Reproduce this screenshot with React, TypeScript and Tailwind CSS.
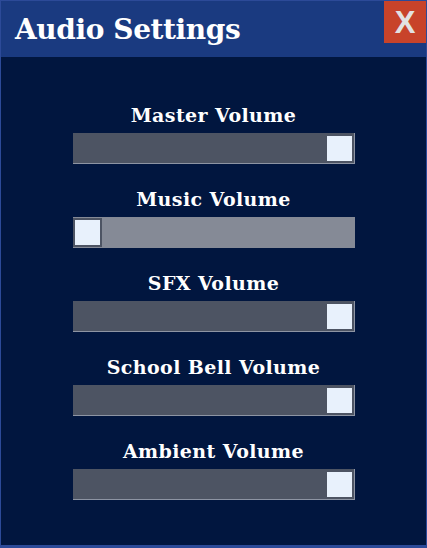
const sliders = [
  { label: 'Master Volume', value: 100 },
  { label: 'Music Volume', value: 0 },
  { label: 'SFX Volume', value: 100 },
  { label: 'School Bell Volume', value: 100 },
  { label: 'Ambient Volume', value: 100 },
];

export default function App() {
  return (
    <div className="w-[427px] h-[548px] bg-[#01163f] border border-b-[3px] border-[#2c4a98] flex flex-col font-['DejaVu_Serif',serif]">
      <header className="h-[56px] bg-[#1a3a80] flex items-start justify-between shrink-0">
        <h1 className="text-[28px] leading-[58px] font-bold text-white pl-[14px] tracking-[-0.4px]">
          Audio Settings
        </h1>
        <button className="w-[42px] h-[42px] bg-[#c8432a] flex items-center justify-center font-['Liberation_Sans',sans-serif] font-bold text-[31px] leading-none text-[#e2e2e2]">
          X
        </button>
      </header>

      <div className="flex flex-col items-center pt-[46px] gap-[23px]">
        {sliders.map((s) => (
          <div key={s.label} className="flex flex-col items-center gap-[6px]">
            <span className="text-[19px] leading-[24px] font-bold text-white tracking-[0.4px]">{s.label}</span>
            <div
              className={
                s.value === 0
                  ? 'w-[282px] h-[31px] bg-[#858a96] flex items-center justify-start'
                  : 'w-[282px] h-[31px] bg-[#4d5463] border-r border-b border-[#8d94a3] flex items-center justify-end'
              }
            >
              <div className="w-[29px] h-[29px] bg-[#e8f1fc] border-2 border-[#4d5463]" />
            </div>
          </div>
        ))}
      </div>
    </div>
  );
}
